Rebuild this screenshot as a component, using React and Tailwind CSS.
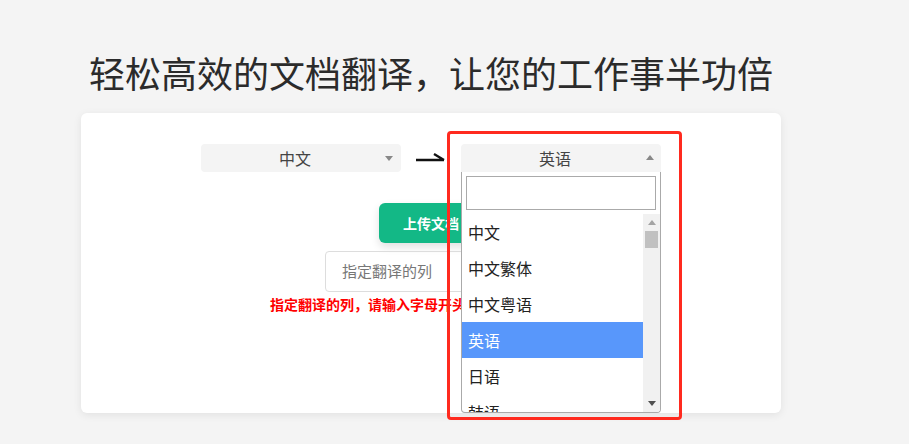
import React from "react";

const font = { fontFamily: '"Noto Sans CJK SC", "Noto Sans", sans-serif' };

function Caret({ up, color = "#888" }) {
  return (
    <svg width="8" height="5" viewBox="0 0 8 5" className="block">
      {up ? <path d="M0 5 L4 0 L8 5 Z" fill={color} /> : <path d="M0 0 L8 0 L4 5 Z" fill={color} />}
    </svg>
  );
}

const options = ["中文", "中文繁体", "中文粤语", "英语", "日语", "韩语"];

export default function App() {
  return (
    <div className="min-h-[444px] w-full bg-[#f4f4f4] pl-[81px] pt-[45px] text-[#333]" style={font}>
      <h1 className="pl-[8px] text-[36px] leading-[54px] font-normal text-[#2b2b2b] mb-[14px]">
        轻松高效的文档翻译，让您的工作事半功倍
      </h1>
      <div className="w-[700px] h-[300px] bg-white rounded-md shadow-[0_2px_8px_rgba(0,0,0,0.08)] flex flex-col items-center pt-[31px]">
        <div className="flex items-center">
          <div className="w-[200px] h-[28px] bg-[#f4f4f4] rounded flex items-center relative">
            <span className="flex-1 text-center text-[16px] text-[#444] leading-none pr-[12px]">中文</span>
            <span className="absolute right-[8px] top-[12px]"><Caret /></span>
          </div>
          <svg width="30" height="12" viewBox="0 0 30 12" className="mx-[15px] -mt-[2px]">
            <path d="M0 9 L28 9 M18 3 L28 9" stroke="#111" strokeWidth="2.4" fill="none" />
          </svg>
          <div className="w-[200px] h-[28px] bg-[#f4f4f4] rounded-t flex items-center relative">
            <span className="flex-1 text-center text-[16px] text-[#444] leading-none pr-[12px]">英语</span>
            <span className="absolute right-[7px] top-[11px]"><Caret up /></span>
            {/* dropdown */}
            <div className="absolute left-0 top-[28px] w-[200px] h-[241px] bg-white border border-t-0 border-[#aaa] rounded-b-sm z-20 flex flex-col overflow-hidden">
              <div className="px-[4px] pt-[4px]">
                <div className="h-[34px] border border-[#aaa] bg-white"></div>
              </div>
              <div className="flex flex-1 mt-[4px] overflow-hidden">
                <div className="flex-1 overflow-hidden">
                  {options.map((o) => (
                    <div
                      key={o}
                      className={
                        "h-[36px] flex items-center pl-[6px] text-[16px] shrink-0 " +
                        (o === "英语" ? "bg-[#5897fb] text-white" : "text-[#222]")
                      }
                    >
                      {o}
                    </div>
                  ))}
                </div>
                <div className="w-[17px] bg-[#f1f1f1] flex flex-col items-center">
                  <div className="h-[17px] flex items-center justify-center"><Caret up color="#a3a3a3" /></div>
                  <div className="w-[13px] h-[17px] bg-[#c1c1c1]"></div>
                  <div className="flex-1"></div>
                  <div className="h-[17px] flex items-center justify-center"><Caret color="#505050" /></div>
                </div>
              </div>
            </div>
            {/* annotation box */}
            <div className="absolute left-[-14px] top-[-13px] w-[235px] h-[289px] border-[3px] border-[#ff2a1f] rounded-[4px] z-30 pointer-events-none"></div>
          </div>
        </div>
        <button className="mt-[31px] w-[104px] h-[40px] bg-[#13b886] rounded-md text-white text-[14px] font-bold shadow-[0_4px_8px_rgba(0,0,0,0.12)]">
          上传文档
        </button>
        <div className="mt-[8px] w-[212px] h-[41px] border border-[#ddd] rounded flex items-center pl-[16px] text-[15px] text-[#777]">
          指定翻译的列
        </div>
        <div className="mt-[2px] text-[14px] font-bold text-[#ff0000] leading-[20px]">
          指定翻译的列，请输入字母开头，多个列用逗号分隔
        </div>
      </div>
    </div>
  );
}
